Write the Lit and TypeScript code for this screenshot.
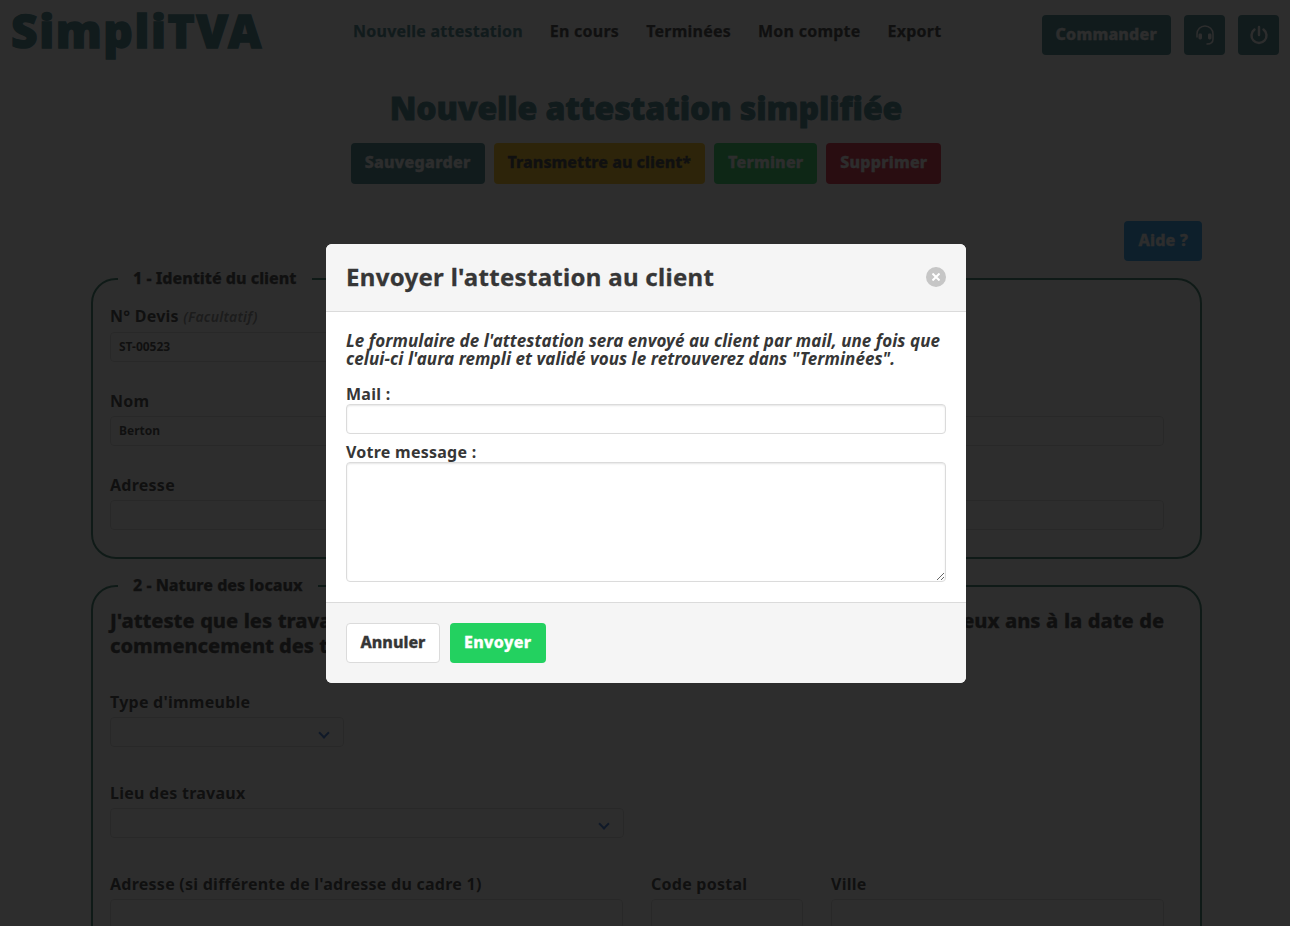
import { LitElement, html, css } from "lit";
import { customElement } from "lit/decorators.js";

@customElement("app-root")
export class AppRoot extends LitElement {
  static styles = css`
    :host { display: block; height: 926px; overflow: hidden; position: relative; background: #fff; color: #363636; font-family: "Noto Sans", "Open Sans", sans-serif; }
    * { box-sizing: border-box; }
    .header { display: flex; align-items: flex-start; height: 71px; padding: 0 11px 0 11px; }
    .logo { font-size: 46px; line-height: 60px; font-weight: 900; color: #3a7f8a; width: 342px; letter-spacing: 1.6px; -webkit-text-stroke: 1.4px #3a7f8a; }
    .nav { display: flex; gap: 27px; flex: 1; padding-top: 20px; font-size: 16px; line-height: 22px; font-weight: 700; letter-spacing: 0.24px; -webkit-text-stroke: 0.25px currentColor; }
    .nav .active { color: #3a7f8a; }
    .actions { display: flex; gap: 13px; padding-top: 15px; }
    .btn { display: inline-flex; align-items: center; justify-content: center; height: 40px; border-radius: 4px; padding: 0 14px 3px; font-size: 16px; font-weight: 800; letter-spacing: 0.22px; -webkit-text-stroke: 0.3px currentColor; color: #fff; background: #3a7f8a; white-space: nowrap; }
    .icon-btn { width: 41px; padding: 0; }
    .page-title { margin: 16px 0 0 2px; text-align: center; font-size: 32px; line-height: 42px; font-weight: 900; letter-spacing: -0.1px; color: #3a7f8a; -webkit-text-stroke: 0.8px #3a7f8a; }
    .tools { display: flex; justify-content: center; gap: 9px; margin: 14px 0 0 2px; }
    .tools .btn { height: 41px; }
    .tools .save { letter-spacing: 0.3px; }
    .tools .warn { letter-spacing: 0; }
    .warn { background: #ffc107; color: #363636; }
    .ok { background: #23d160; }
    .bad { background: #e01e3c; }
    .help { display: flex; justify-content: flex-end; padding-right: 88px; margin-top: 37px; }
    .info { background: #209cee; }
    fieldset { margin: 0 0 17px 91px; width: 1111px; border: 2px solid #2f7a66; border-radius: 25px; padding: 18px 36px 18px 17px; min-width: 0; }
    .sec1 { margin-top: 8px; height: 290px; }
    .sec2 { height: 500px; }
    legend { margin-left: 8px; padding: 0 15px 2px; font-size: 16px; line-height: 18px; font-weight: 800; -webkit-text-stroke: 0.25px currentColor; }
    label { display: block; font-size: 16px; line-height: 18px; padding-bottom: 6px; font-weight: 700; letter-spacing: 0.25px; white-space: nowrap; }
    label em { font-size: 14px; font-weight: 600; color: #8a8a8a; }
    .row { display: grid; gap: 28px; margin-bottom: 30px; }
    .sec2 .row { margin-bottom: 37px; }
    .r1 { grid-template-columns: 513px; }
    .r2 { grid-template-columns: 513px 513px; }
    .r3 { grid-template-columns: 513px 152px 333px; }
    .field { height: 30px; border: 1px solid #dbdbdb; border-radius: 4px; padding: 0 8px; font-size: 12px; line-height: 28px; font-weight: 700; position: relative; background: #fff; }
    .select::after { content: ""; position: absolute; right: 15px; top: 11px; width: 6px; height: 6px; border: 2px solid #3273dc; border-top: 0; border-right: 0; transform: rotate(-45deg); }
    .w234 { width: 234px; }
    .w514 { width: 514px; }
    .para { margin: -6px 0 35px; font-size: 20px; line-height: 25px; font-weight: 800; letter-spacing: -0.05px; text-align: justify; -webkit-text-stroke: 0.3px currentColor; }
    .modal { position: absolute; inset: 0; }
    .backdrop { position: absolute; inset: 0; background: rgba(10, 10, 10, 0.86); }
    .card { position: absolute; left: 326px; top: 244px; width: 640px; height: 439px; border-radius: 6px; overflow: hidden; display: flex; flex-direction: column; background: #fff; }
    .card-head { height: 68px; flex: none; background: #f5f5f5; border-bottom: 1px solid #dbdbdb; padding: 0 20px 2px; display: flex; align-items: center; justify-content: space-between; }
    .card-head h2 { margin: 0; font-size: 24px; font-weight: 700; line-height: 30px; letter-spacing: 0.3px; -webkit-text-stroke: 0.3px currentColor; }
    .close { width: 20px; height: 20px; border-radius: 50%; background: rgba(10, 10, 10, 0.2); display: flex; align-items: center; justify-content: center; }
    .card-body { flex: 1; padding: 20px; }
    .intro { margin: 0 0 17px; font-size: 17px; line-height: 18px; font-weight: 700; font-style: italic; letter-spacing: 0.06px; }
    .card-body label { line-height: 18px; padding-bottom: 1px; margin-top: 0; }
    .m-input { height: 30px; border: 1px solid #dbdbdb; border-radius: 4px; box-shadow: inset 0 1px 2px rgba(10, 10, 10, 0.1); margin-bottom: 9px; }
    textarea { display: block; width: 100%; height: 120px; border: 1px solid #dbdbdb; border-radius: 4px; box-shadow: inset 0 1px 2px rgba(10, 10, 10, 0.1); outline: none; }
    .card-foot { height: 81px; flex: none; background: #f5f5f5; border-top: 1px solid #dbdbdb; padding: 20px; display: flex; gap: 10px; }
    .cancel { background: #fff; border: 1px solid #dbdbdb; color: #363636; padding: 0 13.5px 3px; letter-spacing: 0; }
    .send { padding: 0 14px 3px; letter-spacing: 0.36px; }
  `;

  render() {
    return html`
      <div class="header">
        <div class="logo">SimpliTVA</div>
        <div class="nav">
          <span class="active">Nouvelle attestation</span><span>En cours</span><span>Terminées</span><span>Mon compte</span><span>Export</span>
        </div>
        <div class="actions">
          <span class="btn">Commander</span>
          <span class="btn icon-btn">
            <svg width="20" height="22" viewBox="0 0 20 22" fill="none" stroke="#fff" stroke-width="1.500" stroke-linecap="round"><path d="M2 13V10a8 8 0 0 1 16 0v5c0 3-2 5-6 5"/><rect x="3.500" y="9.500" width="3.500" height="6" rx="1.400" fill="#fff" stroke="none"/><rect x="13" y="9.500" width="3.500" height="6" rx="1.400" fill="#fff" stroke="none"/></svg>
          </span>
          <span class="btn icon-btn">
            <svg width="20" height="20" viewBox="0 0 20 20" fill="none" stroke="#fff" stroke-width="2.400" stroke-linecap="round"><path d="M10 2v8"/><path d="M5.500 4.500a7.500 7.500 0 1 0 9 0"/></svg>
          </span>
        </div>
      </div>
      <div class="page-title">Nouvelle attestation simplifiée</div>
      <div class="tools">
        <span class="btn save">Sauvegarder</span>
        <span class="btn warn">Transmettre au client*</span>
        <span class="btn ok">Terminer</span>
        <span class="btn bad">Supprimer</span>
      </div>
      <div class="help"><span class="btn info">Aide ?</span></div>
      <fieldset class="sec1">
        <legend>1 - Identité du client</legend>
        <div class="row r1"><div><label>N° Devis <em><i>(Facultatif)</i></em></label><div class="field">ST-00523</div></div></div>
        <div class="row r2"><div><label>Nom</label><div class="field">Berton</div></div><div><label>Prénom</label><div class="field"></div></div></div>
        <div class="row r3"><div><label>Adresse</label><div class="field"></div></div><div><label>Code postal</label><div class="field"></div></div><div><label>Ville</label><div class="field"></div></div></div>
      </fieldset>
      <fieldset class="sec2">
        <legend>2 - Nature des locaux</legend>
        <p class="para">J'atteste que les travaux à réaliser portent sur un immeuble achevé depuis plus de deux ans à la date de commencement des travaux.</p>
        <div class="row"><div><label>Type d'immeuble</label><div class="field select w234"></div></div></div>
        <div class="row"><div><label>Lieu des travaux</label><div class="field select w514"></div></div></div>
        <div class="row r3"><div><label>Adresse (si différente de l'adresse du cadre 1)</label><div class="field"></div></div><div><label>Code postal</label><div class="field"></div></div><div><label>Ville</label><div class="field"></div></div></div>
      </fieldset>
      <div class="modal">
        <div class="backdrop"></div>
        <div class="card">
          <div class="card-head">
            <h2>Envoyer l'attestation au client</h2>
            <span class="close"><svg width="8" height="8" viewBox="0 0 8 8" stroke="#fff" stroke-width="2"><path d="M0.500 0.500l7 7M7.500 0.500l-7 7"/></svg></span>
          </div>
          <div class="card-body">
            <p class="intro">Le formulaire de l'attestation sera envoyé au client par mail, une fois que celui-ci l'aura rempli et validé vous le retrouverez dans "Terminées".</p>
            <label>Mail :</label>
            <div class="m-input"></div>
            <label>Votre message :</label>
            <textarea></textarea>
          </div>
          <div class="card-foot">
            <span class="btn cancel">Annuler</span>
            <span class="btn ok send">Envoyer</span>
          </div>
        </div>
      </div>
    `;
  }
}
